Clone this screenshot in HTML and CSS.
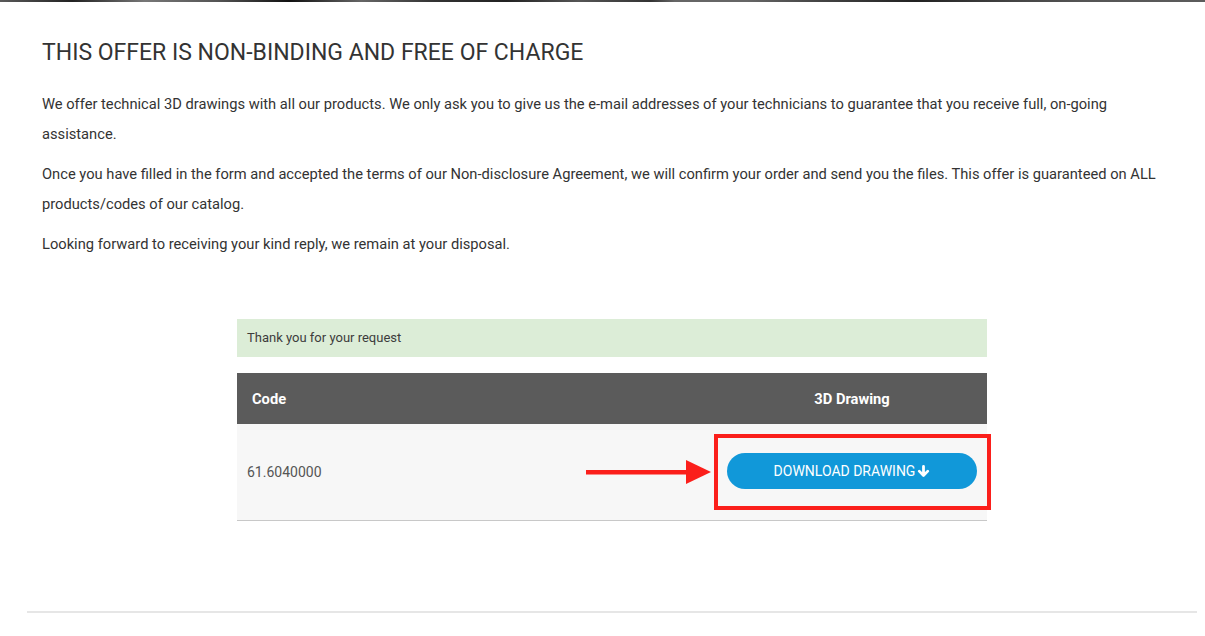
FILE: index.html
```html
<!DOCTYPE html>
<html>
<head>
<meta charset="utf-8">
<link rel="stylesheet" href="styles.css">
</head>
<body>
<div class="topbar"></div>
<div class="container">
  <h1 class="title">THIS OFFER IS NON-BINDING AND FREE OF CHARGE</h1>
  <p class="text">We offer technical 3D drawings with all our products. We only ask you to give us the e-mail addresses of your technicians to guarantee that you receive full, on-going assistance.</p>
  <p class="text">Once you have filled in the form and accepted the terms of our Non-disclosure Agreement, we will confirm your order and send you the files. This offer is guaranteed on ALL products/codes of our catalog.</p>
  <p class="text">Looking forward to receiving your kind reply, we remain at your disposal.</p>

  <div class="result">
    <div class="alert">Thank you for your request</div>
    <div class="table">
      <div class="thead">
        <div class="col-code">Code</div>
        <div class="col-dl">3D Drawing</div>
      </div>
      <div class="trow">
        <div class="col-code">61.6040000</div>
        <div class="col-dl">
          <a class="btn">DOWNLOAD DRAWING<svg class="dl-icon" viewBox="0 0 14 14"><path d="M7 1.5v9.5M2.4 6.6L7 11.2l4.6-4.6" fill="none" stroke="#fff" stroke-width="3" stroke-linecap="round" stroke-linejoin="round"/></svg></a>
          <div class="highlight"></div>
          <svg class="pointer" width="126" height="26" viewBox="0 0 126 26"><rect x="0" y="11" width="104" height="4.5" fill="#fb1f1b"/><polygon points="100,1 125,13 100,25" fill="#fb1f1b"/></svg>
        </div>
      </div>
    </div>
  </div>
  <hr class="rule">
</div>
</body>
</html>
```

FILE: styles.css
```css
html, body {
  margin: 0;
  padding: 0;
  background: #fff;
}
body {
  font-family: Roboto, "Liberation Sans", Arial, sans-serif;
  color: #333;
}
.topbar {
  height: 2px;
  background: linear-gradient(90deg, #5a5a5a 0%, #222 6%, #777 12%, #555 18%, #111 24%, #666 30%, #333 36%, #222 42%, #555 48%, #333 54%, #666 56%, #666 62%, #444 68%, #222 76%, #444 84%, #555 90%, #5c5c5c 100%);
}
.container {
  width: 1140px;
  margin-left: 27px;
  padding: 0 15px;
}
.title {
  margin: 38px 0 23px;
  font-size: 23px;
  font-weight: 400;
  line-height: 26px;
  color: #333;
}
.text {
  margin: 0 0 10px;
  font-size: 14.7px;
  line-height: 30px;
  color: #333;
  padding-right: 15px;
}
.result {
  width: 750px;
  margin: 60px auto 0;
}
.alert {
  background: #dcedd7;
  height: 38px;
  line-height: 38px;
  padding-left: 10px;
  font-size: 13px;
  color: #3c3c3c;
}
.table {
  margin-top: 16px;
}
.thead {
  display: flex;
  align-items: center;
  height: 51px;
  background: #5b5b5b;
  color: #fff;
  font-size: 14.7px;
  font-weight: 700;
}
.thead .col-code {
  padding-left: 15px;
}
.trow {
  display: flex;
  align-items: center;
  height: 96px;
  background: #f7f7f7;
  border-bottom: 1px solid #c8c8c8;
  font-size: 14px;
  color: #555;
}
.col-code {
  flex: 1;
  padding-left: 10px;
}
.col-dl {
  width: 270px;
  display: flex;
  justify-content: center;
  position: relative;
}
.btn {
  display: flex;
  align-items: center;
  justify-content: center;
  width: 250px;
  height: 36px;
  border-radius: 18px;
  background: #1198d9;
  color: #fff;
  font-size: 14px;
  text-decoration: none;
  position: relative;
  top: -1px;
}
.dl-icon {
  width: 13px;
  height: 13px;
  margin-left: 2px;
}
.highlight {
  position: absolute;
  left: -3px;
  top: -20px;
  width: 269px;
  height: 68px;
  border: 4px solid #fb1f1b;
}
.pointer {
  position: absolute;
  left: -131px;
  top: 5px;
}
.rule {
  margin: 90px -15px 0;
  border: 0;
  border-top: 2px solid #e6e6e6;
  height: 0;
}
```
